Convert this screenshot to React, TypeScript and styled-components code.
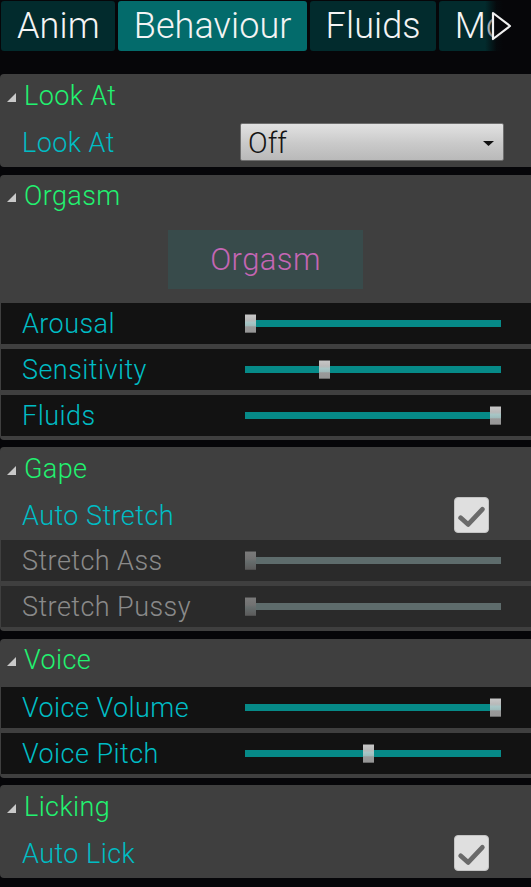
import React from "react";
import styled, { createGlobalStyle } from "styled-components";

const Global = createGlobalStyle`
  html, body { margin: 0; padding: 0; background: #060609; overflow: hidden; }
  body { font-family: Roboto, "Noto Sans", sans-serif; font-weight: 300; }
`;

const Page = styled.div`
  width: 531px;
  height: 887px;
  background: #060609;
  display: flex;
  flex-direction: column;
  overflow: hidden;
`;

const TabBar = styled.div`
  position: relative;
  display: flex;
  gap: 3px;
  padding: 1px 0 0 1px;
  height: 51px;
  box-sizing: border-box;
  overflow: hidden;
  flex-shrink: 0;
`;

const Tab = styled.div<{ $active?: boolean }>`
  flex-shrink: 0;
  height: 50px;
  padding: 0 15px 0 16px;
  display: flex;
  align-items: center;
  border-radius: 3px;
  background: ${(p) => (p.$active ? "#036b6b" : "#022b2d")};
  color: #f4f4f4;
  font-size: 36px;
  letter-spacing: 0.1px;
`;

const TabFade = styled.div`
  position: absolute;
  top: 0;
  right: 0;
  width: 46px;
  height: 51px;
  background: linear-gradient(to right, rgba(6, 6, 9, 0) 0%, rgba(6, 6, 9, 0.9) 25%, #060609 40%);
  display: flex;
  align-items: center;
  justify-content: flex-end;
  padding-right: 19px;
  box-sizing: border-box;
`;

const Panels = styled.div`
  display: flex;
  flex-direction: column;
  gap: 7.5px;
  margin-top: 23px;
`;

const Panel = styled.section`
  width: 537px;
  background: #3f3f3f;
  border-radius: 4px;
  display: flex;
  flex-direction: column;
`;

const Header = styled.div`
  height: 43px;
  display: flex;
  align-items: center;
  padding-left: 7px;
  gap: 8px;
  color: #22f270;
  font-size: 27px;
  letter-spacing: 0.4px;
`;

const Row = styled.div<{ $padRight: number }>`
  height: 50px;
  display: flex;
  align-items: center;
  justify-content: space-between;
  padding: 0 ${(p) => p.$padRight}px 0 22px;
`;

const Label = styled.span<{ $disabled?: boolean }>`
  color: ${(p) => (p.$disabled ? "#8a8a8a" : "#00bcc4")};
  font-size: 27px;
  letter-spacing: 0.45px;
  padding-top: 1px;
`;

const SliderRowBox = styled.div<{ $disabled?: boolean }>`
  height: 41px;
  margin: 5px 0 0 1px;
  background: ${(p) => (p.$disabled ? "#2a2a2a" : "#121212")};
  display: flex;
  align-items: center;
  justify-content: space-between;
  padding: 0 36px 0 21px;
  ${Row} + & {
    margin-top: 0;
  }
  &:last-child {
    margin-bottom: 4px;
  }
`;

const SliderBox = styled.div`
  position: relative;
  width: 256px;
  height: 19px;
`;

const Track = styled.div<{ $disabled?: boolean }>`
  position: absolute;
  left: 0;
  right: 0;
  top: 6px;
  height: 7px;
  background: ${(p) => (p.$disabled ? "#5e6c6c" : "#068a88")};
`;

const Handle = styled.div<{ $disabled?: boolean }>`
  position: absolute;
  top: 0;
  width: 11px;
  height: 19px;
  box-sizing: border-box;
  border-top: 1px solid ${(p) => (p.$disabled ? "#505050" : "#6a6a6a")};
  border-bottom: 1px solid ${(p) => (p.$disabled ? "#505050" : "#6a6a6a")};
  background: ${(p) =>
    p.$disabled
      ? "linear-gradient(#7a7a7a 0%, #727272 40%, #666d6d 55%, #5c5c5c 100%)"
      : "linear-gradient(#c6c6c6 0%, #b9b9b9 30%, #a6c6c6 45%, #9fbcbc 62%, #999999 70%, #969696 100%)"};
`;

const ButtonArea = styled.div`
  display: flex;
  justify-content: center;
  padding: 12px 0 9px 0;
  margin-left: -6px;
`;

const BigButton = styled.div`
  width: 195px;
  height: 59px;
  background: #384b4b;
  color: #c466b4;
  font-size: 31px;
  letter-spacing: 0.4px;
  display: flex;
  align-items: center;
  justify-content: center;
`;

const Dropdown = styled.div`
  width: 264px;
  height: 38px;
  box-sizing: border-box;
  border: 1px solid #6e6e6e;
  border-radius: 2px;
  background: linear-gradient(#e2e2e2, #c9c9c9 55%, #b9b9b9);
  display: flex;
  align-items: center;
  justify-content: space-between;
  padding: 2px 9px 0 7px;
  color: #151515;
  font-size: 29px;
`;

const CheckBox = styled.div`
  width: 35px;
  height: 36px;
  box-sizing: border-box;
  border-radius: 4px;
  background: #dfdfdf;
  border: 1px solid #c4c4c4;
  display: flex;
  align-items: center;
  justify-content: center;
`;

const Triangle = () => (
  <svg width="9" height="9" viewBox="0 0 9 9" style={{ marginTop: 3 }}>
    <polygon points="9,0 9,9 0,9" fill="#c9c9c9" />
  </svg>
);

const SectionHeader = ({ title }: { title: string }) => (
  <Header>
    <Triangle />
    <span>{title}</span>
  </Header>
);

const Slider = ({ label, value, disabled }: { label: string; value: number; disabled?: boolean }) => (
  <SliderRowBox $disabled={disabled}>
    <Label $disabled={disabled}>{label}</Label>
    <SliderBox>
      <Track $disabled={disabled} />
      <Handle $disabled={disabled} style={{ left: `${Math.round(value * 245)}px` }} />
    </SliderBox>
  </SliderRowBox>
);

const Check = ({ label }: { label: string }) => (
  <Row $padRight={48}>
    <Label>{label}</Label>
    <CheckBox>
      <svg width="35" height="36" viewBox="0 0 35 36">
        <path d="M6 21 L14 28 L29 12" fill="none" stroke="#6a6a6a" strokeWidth="5" strokeLinejoin="round" strokeLinecap="round" />
      </svg>
    </CheckBox>
  </Row>
);

export default function App() {
  return (
    <Page>
      <Global />
      <TabBar>
        <Tab>Anim</Tab>
        <Tab $active>Behaviour</Tab>
        <Tab>Fluids</Tab>
        <Tab>Mods</Tab>
        <TabFade>
          <svg width="21" height="30" viewBox="0 0 21 30">
            <polygon points="2,2 19,15 2,28" fill="#060609" stroke="#f0f0f0" strokeWidth="2.2" strokeLinejoin="round" />
          </svg>
        </TabFade>
      </TabBar>
      <Panels>
        <Panel>
          <SectionHeader title="Look At" />
          <Row $padRight={33}>
            <Label>Look At</Label>
            <Dropdown>
              <span>Off</span>
              <svg width="11" height="5" viewBox="0 0 11 5">
                <polygon points="0,0 11,0 5.5,5" fill="#111" />
              </svg>
            </Dropdown>
          </Row>
        </Panel>
        <Panel>
          <SectionHeader title="Orgasm" />
          <ButtonArea>
            <BigButton>Orgasm</BigButton>
          </ButtonArea>
          <Slider label="Arousal" value={0} />
          <Slider label="Sensitivity" value={0.302} />
          <Slider label="Fluids" value={1} />
        </Panel>
        <Panel>
          <SectionHeader title="Gape" />
          <Check label="Auto Stretch" />
          <Slider label="Stretch Ass" value={0} disabled />
          <Slider label="Stretch Pussy" value={0} disabled />
        </Panel>
        <Panel>
          <SectionHeader title="Voice" />
          <Slider label="Voice Volume" value={1} />
          <Slider label="Voice Pitch" value={0.48} />
        </Panel>
        <Panel>
          <SectionHeader title="Licking" />
          <Check label="Auto Lick" />
        </Panel>
      </Panels>
    </Page>
  );
}
